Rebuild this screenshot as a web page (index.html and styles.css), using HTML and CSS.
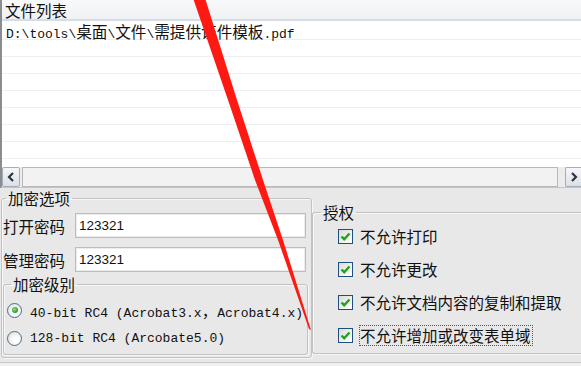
FILE: index.html
```html
<!DOCTYPE html>
<html lang="zh-CN">
<head>
    <meta charset="UTF-8">
    <meta name="viewport" content="width=device-width, initial-scale=1.0">
    <title>PDF 加密</title>
    <link rel="stylesheet" href="styles.css">
</head>
<body>
    <div class="list">
        <div class="list-head">文件列表</div>
        <div class="rows">
            <div class="row file"><span class="mono">D:\tools\<span class="wide">桌面</span>\<span class="wide">文件</span>\<span class="wide">需提供证件模板</span>.pdf</span></div>
            <div class="row"></div>
            <div class="row"></div>
            <div class="row"></div>
            <div class="row"></div>
            <div class="row"></div>
            <div class="row"></div>
            <div class="row"></div>
            <div class="row"></div>
        </div>
        <div class="hscroll">
            <div class="sb-btn"><svg width="8" height="10" viewBox="0 0 8 10"><polyline points="6,1 2,5 6,9" fill="none" stroke="#2d3440" stroke-width="2.2"/></svg></div>
            <div class="sb-thumb"></div>
            <div class="sb-btn right"><svg width="8" height="10" viewBox="0 0 8 10"><polyline points="2,1 6,5 2,9" fill="none" stroke="#2d3440" stroke-width="2.2"/></svg></div>
        </div>
    </div>

    <div class="panel">
        <fieldset class="group enc">
            <legend>加密选项</legend>
            <div class="field"><label>打开密码</label><input type="text" value="123321"></div>
            <div class="field"><label>管理密码</label><input type="text" value="123321"></div>
            <fieldset class="group level">
                <legend>加密级别</legend>
                <div class="opt"><span class="radio on"></span><span class="mono">40-bit RC4 (Acrobat3.x<span class="wide">，</span>Acrobat4.x)</span></div>
                <div class="opt"><span class="radio"></span><span class="mono">128-bit RC4 (Arcobate5.0)</span></div>
            </fieldset>
        </fieldset>

        <fieldset class="group perm">
            <legend>授权</legend>
            <div class="check"><span class="box"><svg width="13" height="13" viewBox="0 0 13 13"><path d="M2.5 6.5 L5.2 9.2 L10.5 3.5" fill="none" stroke="#21a121" stroke-width="2.4"/></svg></span><span class="text">不允许打印</span></div>
            <div class="check"><span class="box"><svg width="13" height="13" viewBox="0 0 13 13"><path d="M2.5 6.5 L5.2 9.2 L10.5 3.5" fill="none" stroke="#21a121" stroke-width="2.4"/></svg></span><span class="text">不允许更改</span></div>
            <div class="check"><span class="box"><svg width="13" height="13" viewBox="0 0 13 13"><path d="M2.5 6.5 L5.2 9.2 L10.5 3.5" fill="none" stroke="#21a121" stroke-width="2.4"/></svg></span><span class="text">不允许文档内容的复制和提取</span></div>
            <div class="check"><span class="box"><svg width="13" height="13" viewBox="0 0 13 13"><path d="M2.5 6.5 L5.2 9.2 L10.5 3.5" fill="none" stroke="#21a121" stroke-width="2.4"/></svg></span><span class="text focus">不允许增加或改变表单域</span></div>
        </fieldset>
    </div>
    <div class="foot"></div>

    <!-- red annotation stroke drawn over the window -->
    <svg class="mark" width="581" height="366" viewBox="0 0 581 366">
        <polygon points="193,-2 228,100 255,180 278,240 309,329 311,330 283,240 263,180 237,100 205,-2" fill="#fe1a12"/>
    </svg>
</body>
</html>
```

FILE: styles.css
```css
* {
    box-sizing: border-box;
}
html, body {
    margin: 0;
    padding: 0;
}
body {
    position: relative;
    width: 581px;
    height: 366px;
    overflow: hidden;
    background-color: #e8e8e8;
    font-family: "Noto Sans CJK SC", sans-serif;
    font-size: 15.5px;
    color: #111;
}

.mono {
    font-family: "Liberation Mono", "Noto Sans CJK SC", monospace;
    font-size: 13px;
}
.mono .wide {
    font-family: "Noto Sans CJK SC", sans-serif;
    font-size: 15.6px;
}

/* file list */
.list {
    height: 188px;
    display: flex;
    flex-direction: column;
    background-color: #fff;
    border-left: 2px solid #8c8c8c;
    border-bottom: 1px solid #c4c4c4;
}
.list-head {
    height: 21px;
    flex: none;
    padding: 2px 0 0 3px;
    line-height: 17px;
    background: linear-gradient(#f8f9fa, #eff1f4);
    border-bottom: 2px solid #d7dde6;
}
.rows {
    flex: 1;
    overflow: hidden;
}
.row {
    height: 17px;
    border-bottom: 1px solid #efefef;
}
.row.file {
    height: 19px;
    padding-left: 4px;
    line-height: 20px;
}
.hscroll {
    height: 20px;
    flex: none;
    display: flex;
    background-color: #ececec;
}
.sb-btn {
    width: 18px;
    flex: none;
    display: flex;
    align-items: center;
    justify-content: center;
    border: 1px solid #a3aebb;
    border-radius: 2px;
    background: linear-gradient(#f6f7f9, #dce0e5);
}
.sb-btn.right {
    width: 16px;
    margin-left: 7px;
    border-right: none;
    border-radius: 2px 0 0 2px;
    justify-content: flex-start;
    padding-left: 4px;
}
.sb-thumb {
    width: 536px;
    flex: none;
    margin-left: 2px;
    border: 1px solid #b8b8b8;
    background-color: #f2f2f2;
}

/* lower panel */
.panel {
    height: 174px;
    padding-top: 2px;
    display: flex;
    align-items: flex-start;
}
.group {
    margin: 0;
    min-width: 0;
    border: 1px solid #c2c2c2;
    border-radius: 3px;
    box-shadow: inset 1px 1px 0 #f7f7f7, 1px 1px 0 #f7f7f7;
}
.group legend {
    padding: 0 2px;
    line-height: 16px;
}
.enc {
    width: 311px;
    flex: none;
    margin-left: 1px;
    padding: 7px 2px 2px 1px;
}
.enc > legend {
    margin-left: 3px;
}
.field {
    display: flex;
    align-items: center;
    height: 25px;
    margin-bottom: 9px;
}
.field label {
    width: 72px;
    flex: none;
}
.field input {
    width: 231px;
    height: 25px;
    padding: 0 3px;
    border: 1px solid #bcbcbc;
    box-shadow: inset 0 0 0 1px #ececec;
    font-family: "Liberation Sans", sans-serif;
    font-size: 13.5px;
    color: #111;
    background-color: #fff;
    outline: none;
}
.level {
    width: 305px;
    margin-top: -5px;
    padding: 8px 2px 6px 3px;
}
.level > legend {
    margin-left: 4px;
}
.opt {
    display: flex;
    align-items: center;
    height: 20px;
    margin-bottom: 8px;
}
.opt:last-child {
    margin-bottom: 0;
}
.radio {
    width: 15px;
    height: 15px;
    flex: none;
    margin-right: 8px;
    border: 1px solid #4d6d8d;
    border-radius: 50%;
    background: radial-gradient(circle at 60% 60%, #ffffff 20%, #d8d8d2 100%);
    display: flex;
    align-items: center;
    justify-content: center;
}
.radio.on::after {
    content: "";
    width: 6px;
    height: 6px;
    border-radius: 50%;
    background: radial-gradient(circle at 40% 40%, #8fe08f, #1f9b1f 70%);
}

.perm {
    flex: 1;
    margin-top: 14px;
    padding: 4px 0 6px 7px;
    border-right: none;
    border-radius: 3px 0 0 3px;
}
.perm > legend {
    margin-left: 1px;
}
.check {
    display: flex;
    align-items: center;
    height: 24px;
    margin: 0 0 9px 18px;
}
.check:last-child {
    margin-bottom: 0;
}
.box {
    width: 15px;
    height: 15px;
    flex: none;
    margin-right: 6px;
    border: 1px solid #1f4f7e;
    background: linear-gradient(135deg, #dcdcd6, #ffffff);
    display: flex;
    align-items: center;
    justify-content: center;
}
.check .text {
    border: 1px dotted transparent;
    line-height: 19px;
    padding-right: 1px;
}
.check .text.focus {
    border-color: #555;
}

.foot {
    height: 4px;
    border-top: 1px solid #c8c8c8;
    background-color: #f0f0f0;
}

.mark {
    position: absolute;
    left: 0;
    top: 0;
    pointer-events: none;
}
```
